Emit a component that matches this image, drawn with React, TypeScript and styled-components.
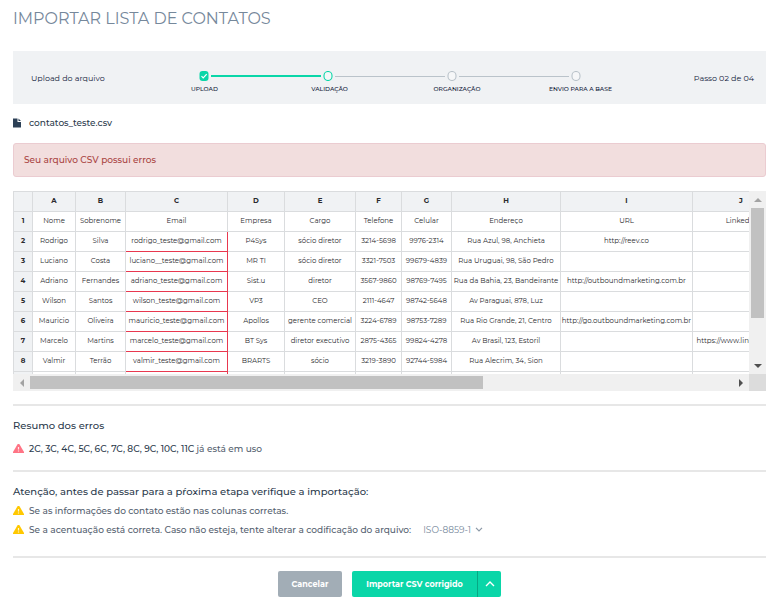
import React, { useState } from "react";
import styled, { createGlobalStyle, css } from "styled-components";

const GlobalStyle = createGlobalStyle`
  *, *::before, *::after { box-sizing: border-box; }
  body {
    margin: 0;
    background: #fff;
    color: #2b3a4c;
    font-family: Montserrat, Inter, "Open Sans", sans-serif;
    font-size: 9px;
    font-weight: 500;
    line-height: 16px;
  }
  button, select { font: inherit; }
`;

const Page = styled.main`
  padding: 8px 11px 7px 13px;
`;

const Title = styled.h1`
  margin: 0 0 21px;
  color: #76889b;
  font-size: 16px;
  font-weight: 400;
  line-height: 22px;
`;

const ProgressBar = styled.section`
  display: grid;
  grid-template-columns: 1fr minmax(0, 500px) 1fr;
  height: 53px;
  padding: 0 12px;
  align-items: center;
  background: #f0f2f4;
  color: #10203a;
  font-size: 8px;
  font-weight: 400;
`;

const StepTitle = styled.span`
  padding-left: 6px;
`;

const StepCount = styled.span`
  text-align: right;
`;

const Stepper = styled.div`
  padding-top: 9px;
`;

const Track = styled.div`
  display: flex;
  align-items: center;
  justify-content: center;
  gap: 2px;
  height: 10px;
`;

const Node = styled.svg`
  flex: none;
  width: 10px;
  height: 10px;
`;

const Connector = styled.span<{ $done?: boolean }>`
  width: 110px;
  height: ${(p) => (p.$done ? "2px" : "1px")};
  background: ${(p) => (p.$done ? "#0ad6a8" : "#bac3ca")};
`;

const StepLabels = styled.ol`
  display: grid;
  grid-template-columns: 124px 126px 129px 118px;
  justify-content: center;
  margin: 4px 0 0;
  padding: 0 0 0 3px;
  list-style: none;
  font-size: 6px;
  font-weight: 500;
  line-height: 8px;
  text-align: center;
`;

const IconRow = styled.div`
  display: grid;
  grid-template-columns: 16px 1fr;
  align-items: center;
  height: 19px;
`;

const FileRow = styled(IconRow)`
  height: 37px;
  margin-bottom: 2px;
`;

const FileIcon = styled.svg`
  display: block;
  width: 10px;
  height: 10px;
`;

const WarningIcon = styled.svg`
  display: block;
  width: 11px;
  height: 9px;
`;

const Alert = styled.div`
  padding: 8px 10px;
  border: 1px solid #ebccd1;
  border-radius: 3px;
  background: #f2dede;
  color: #a94442;
`;

const Sheet = styled.section`
  display: grid;
  grid-template-columns: minmax(0, 1fr) 17px;
  grid-template-rows: 183px 17px;
  margin: 14px 0 13px;
`;

const SheetView = styled.div`
  overflow: hidden;
`;

const Table = styled.table`
  width: 776px;
  table-layout: fixed;
  border-collapse: collapse;
  color: #2a2a2e;
  font-size: 7px;
  font-weight: 400;
  line-height: 10px;
  text-align: center;
`;

const Col = styled.col<{ $width: number }>`
  width: ${(p) => p.$width}px;
`;

const HeadCell = styled.th`
  height: 20px;
  padding: 0 0 2px;
  border: 1px solid #dadcde;
  background: #f0f2f4;
  font-weight: 700;
`;

const Cell = styled.td<{ $error?: boolean }>`
  height: 20px;
  padding: 0 0 2px;
  border: 1px solid #dadcde;
  white-space: nowrap;
  ${(p) =>
    p.$error &&
    css`
      border-right-color: #e8384f;
      border-bottom-color: #e8384f;
    `}
`;

const ScrollBar = styled.div<{ $vertical?: boolean }>`
  display: flex;
  flex-direction: ${(p) => (p.$vertical ? "column" : "row")};
  background: #f0f0f0;
`;

const ScrollButton = styled.button`
  flex: none;
  display: grid;
  place-items: center;
  width: 17px;
  height: 17px;
  padding: 0;
  border: 0;
  background: transparent;
`;

const ScrollTrack = styled.div<{ $vertical?: boolean }>`
  flex: 1;
  padding: ${(p) => (p.$vertical ? "0 2px" : "2px 0")};
`;

const ScrollThumb = styled.div<{ $vertical?: boolean }>`
  width: ${(p) => (p.$vertical ? "100%" : "64.5%")};
  height: ${(p) => (p.$vertical ? "74%" : "100%")};
  background: #c1c1c1;
`;

const Corner = styled.div`
  background: #dcdcdc;
`;

const Rule = styled.hr`
  height: 2px;
  margin: 0;
  border: 0;
  background: #e7e7e7;
`;

const Section = styled.section<{ $bottom: number }>`
  padding: 12px 0 ${(p) => p.$bottom}px;
`;

const Heading = styled.h2<{ $gap: number }>`
  margin: 0 0 ${(p) => p.$gap}px;
  font-size: 10px;
  font-weight: 500;
  line-height: 16px;
`;

const Note = styled.span`
  color: #55616f;
`;

const Codes = styled.span`
  color: #2b3a4c;
`;

const Picker = styled.span`
  display: inline-flex;
  align-items: center;
  margin-left: 12px;
  color: #76889b;
`;

const Select = styled.select`
  appearance: none;
  margin: 0;
  padding: 0;
  width: 52px;
  border: 0;
  background: transparent;
  color: inherit;
  font-weight: 400;
`;

const Actions = styled.footer`
  display: flex;
  justify-content: center;
  gap: 10px;
  padding-top: 13px;
`;

const Button = styled.button<{ $width: number; $tone: string }>`
  display: grid;
  place-items: center;
  width: ${(p) => p.$width}px;
  height: 26px;
  padding: 0;
  border: 0;
  border-radius: 2px;
  background: ${(p) => p.$tone};
  color: #fff;
  font-size: 8px;
  font-weight: 700;
`;

const SplitButton = styled.div`
  display: flex;
  overflow: hidden;
  border-radius: 2px;

  ${Button} { border-radius: 0; }
  ${Button} + ${Button} { border-left: 1px solid #07a884; }
`;

const columns = [
  ["A", 43], ["B", 50], ["C", 102], ["D", 57], ["E", 71],
  ["F", 46], ["G", 50], ["H", 109], ["I", 132], ["J", 97],
] as const;

const rows = [
  ["Nome", "Sobrenome", "Email", "Empresa", "Cargo", "Telefone", "Celular", "Endereço", "URL", "LinkedIn"],
  ["Rodrigo", "Silva", "rodrigo_teste@gmail.com", "P4Sys", "sócio diretor", "3214-5698", "9976-2314", "Rua Azul, 98, Anchieta", "http://reev.co", ""],
  ["Luciano", "Costa", "luciano__teste@gmail.com", "MR TI", "sócio diretor", "3321-7503", "99679-4839", "Rua Uruguai, 98, São Pedro", "", ""],
  ["Adriano", "Fernandes", "adriano_teste@gmail.com", "Sist.u", "diretor", "3567-9860", "98769-7495", "Rua da Bahia, 23, Bandeirante", "http://outboundmarketing.com.br", ""],
  ["Wilson", "Santos", "wilson_teste@gmail.com", "VP3", "CEO", "2111-4647", "98742-5648", "Av Paraguai, 878, Luz", "", ""],
  ["Mauricio", "Oliveira", "mauricio_teste@gmail.com", "Apollos", "gerente comercial", "3224-6789", "98753-7289", "Rua Rio Grande, 21, Centro", "http://go.outboundmarketing.com.br", ""],
  ["Marcelo", "Martins", "marcelo_teste@gmail.com", "BT Sys", "diretor executivo", "2875-4365", "99824-4278", "Av Brasil, 123, Estoril", "", "https://www.linkedin.com"],
  ["Valmir", "Terrão", "valmir_teste@gmail.com", "BRARTS", "sócio", "3219-3890", "92744-5984", "Rua Alecrim, 34, Sion", "", ""],
  ["", "", "", "", "", "", "", "", "", ""],
];

const StepNode = ({ state }: { state: "done" | "current" | "next" }) => (
  <Node viewBox="0 0 10 10" aria-hidden="true">
    {state === "done" ? (
      <>
        <rect x="0.5" width="9" height="10" rx="3" fill="#0ad6a8" />
        <path d="M2.5 5.2 4.2 6.9 7.7 3.2" fill="none" stroke="#fff" strokeWidth="1.2" />
      </>
    ) : (
      <rect x="1" y="0.5" width="8" height="9" rx="4" fill="#fff" fillOpacity="0.4"
        stroke={state === "current" ? "#0ad6a8" : "#bac3ca"} strokeWidth="1.1" />
    )}
  </Node>
);

const Warning = ({ color }: { color: string }) => (
  <WarningIcon viewBox="0 0 11 9" role="img" aria-label="Aviso">
    <path d="M4.7 0H6.3L11 8V9H0V8Z" fill={color} />
    <path d="M5.5 3V5.4M5.5 6.4V7.4" stroke="#fff" strokeOpacity="0.85" strokeWidth="1.2" />
  </WarningIcon>
);

const arrows = {
  up: "M0 6 4 2 8 6Z",
  down: "M0 2 4 6 8 2Z",
  left: "M6 0 2 4 6 8Z",
  right: "M2 0 6 4 2 8Z",
};

const Arrow = ({ to, label, color }: { to: keyof typeof arrows; label: string; color: string }) => (
  <ScrollButton type="button" aria-label={label}>
    <svg width="8" height="8" viewBox="0 0 8 8"><path d={arrows[to]} fill={color} /></svg>
  </ScrollButton>
);

export default function App() {
  const [encoding, setEncoding] = useState("ISO-8859-1");

  return (
    <>
      <GlobalStyle />
      <Page>
        <Title>IMPORTAR LISTA DE CONTATOS</Title>

        <ProgressBar>
          <StepTitle>Upload do arquivo</StepTitle>
          <Stepper>
            <Track>
              <StepNode state="done" />
              <Connector $done />
              <StepNode state="current" />
              <Connector />
              <StepNode state="next" />
              <Connector />
              <StepNode state="next" />
            </Track>
            <StepLabels>
              <li>UPLOAD</li>
              <li>VALIDAÇÃO</li>
              <li>ORGANIZAÇÃO</li>
              <li>ENVIO PARA A BASE</li>
            </StepLabels>
          </Stepper>
          <StepCount>Passo 02 de 04</StepCount>
        </ProgressBar>

        <FileRow>
          <FileIcon viewBox="0 0 10 10" aria-hidden="true">
            <path d="M0 0.5H4.5V4H8V9.5H0ZM5.5 0.5 8 3H5.5Z" fill="#2c4056" />
          </FileIcon>
          <span>contatos_teste.csv</span>
        </FileRow>

        <Alert role="alert">Seu arquivo CSV possui erros</Alert>

        <Sheet>
          <SheetView>
            <Table>
              <colgroup>
                <Col $width={19} />
                {columns.map(([name, width]) => <Col key={name} $width={width} />)}
              </colgroup>
              <thead>
                <tr>
                  <HeadCell />
                  {columns.map(([name]) => <HeadCell key={name} scope="col">{name}</HeadCell>)}
                </tr>
              </thead>
              <tbody>
                {rows.map((row, r) => (
                  <tr key={r}>
                    <HeadCell scope="row">{r < 8 ? r + 1 : ""}</HeadCell>
                    {row.map((value, c) => <Cell key={c} $error={c === 2 && r > 0}>{value}</Cell>)}
                  </tr>
                ))}
              </tbody>
            </Table>
          </SheetView>
          <ScrollBar $vertical>
            <Arrow to="up" label="Rolar para cima" color="#a3a3a3" />
            <ScrollTrack $vertical><ScrollThumb $vertical /></ScrollTrack>
            <Arrow to="down" label="Rolar para baixo" color="#505050" />
          </ScrollBar>
          <ScrollBar>
            <Arrow to="left" label="Rolar para a esquerda" color="#a3a3a3" />
            <ScrollTrack><ScrollThumb /></ScrollTrack>
            <Arrow to="right" label="Rolar para a direita" color="#505050" />
          </ScrollBar>
          <Corner />
        </Sheet>

        <Rule />
        <Section $bottom={12}>
          <Heading $gap={5}>Resumo dos erros</Heading>
          <IconRow>
            <Warning color="#ff7485" />
            <Note><Codes>2C, 3C, 4C, 5C, 6C, 7C, 8C, 9C, 10C, 11C</Codes> já está em uso</Note>
          </IconRow>
        </Section>

        <Rule />
        <Section $bottom={17}>
          <Heading $gap={1}>Atenção, antes de passar para a pŕoxima etapa verifique a importação:</Heading>
          <IconRow>
            <Warning color="#ffc800" />
            <Note>Se as informações do contato estão nas colunas corretas.</Note>
          </IconRow>
          <IconRow>
            <Warning color="#ffc800" />
            <Note>
              <label htmlFor="encoding">Se a acentuação está correta. Caso não esteja, tente alterar a codificação do arquivo:</label>
              <Picker>
                <Select id="encoding" value={encoding} onChange={(e) => setEncoding(e.target.value)}>
                  <option>ISO-8859-1</option>
                  <option>UTF-8</option>
                </Select>
                <svg width="8" height="5" viewBox="0 0 8 5" aria-hidden="true">
                  <path d="M1 0.8 4 3.8 7 0.8" fill="none" stroke="#8b98a6" strokeWidth="1.2" />
                </svg>
              </Picker>
            </Note>
          </IconRow>
        </Section>

        <Rule />
        <Actions>
          <Button type="button" $width={64} $tone="#a2adb6">Cancelar</Button>
          <SplitButton>
            <Button type="button" $width={125} $tone="#0ad6a8">Importar CSV corrigido</Button>
            <Button type="button" $width={24} $tone="#0ad6a8" aria-label="Mais opções">
              <svg width="10" height="6" viewBox="0 0 10 6" aria-hidden="true">
                <path d="M1 5 5 1 9 5" fill="none" stroke="#fff" strokeWidth="1.4" />
              </svg>
            </Button>
          </SplitButton>
        </Actions>
      </Page>
    </>
  );
}
